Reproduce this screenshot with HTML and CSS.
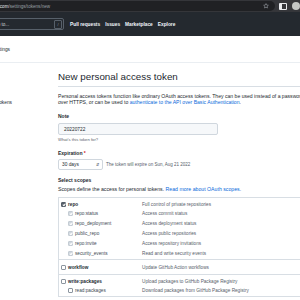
FILE: index.html
```html
<!DOCTYPE html>
<html lang="en">
  <head>
    <meta charset="UTF-8" />
    <meta name="viewport" content="width=device-width, initial-scale=1.0" />
    <title>New personal access token</title>
    <link rel="stylesheet" href="styles.css">
  </head>
  <body>
    <div class="browser-bar">
      <div class="url-field">
        <span class="url-text"><span class="url-host">github.com</span>/settings/tokens/new</span>
        <svg class="url-star" width="6" height="6" viewBox="0 0 16 16">
          <path d="M8 1.5l1.9 4 4.4.5-3.3 3 .9 4.4L8 11.2 4.1 13.4 5 9 1.7 6l4.4-.5z" fill="none" stroke="#9aa0a6" stroke-width="1.6" />
        </svg>
      </div>
      <span class="side-icon"></span>
      <span class="profile-icon"></span>
    </div>

    <header class="gh-header">
      <div class="search">
        <span class="search-text">Jump to...</span>
        <kbd class="search-key">/</kbd>
      </div>
      <nav class="gh-nav">
        <a href="#">Pull requests</a>
        <a href="#">Issues</a>
        <a href="#">Marketplace</a>
        <a href="#">Explore</a>
      </nav>
    </header>

    <div class="breadcrumb">
      <span class="cut-left">Settings</span>
    </div>

    <div class="layout">
      <aside class="sidebar">
        <span class="cut-left side-item">Personal access tokens</span>
      </aside>

      <main class="content">
        <h2 class="page-title">New personal access token</h2>
        <p class="intro">
          Personal access tokens function like ordinary OAuth access tokens. They can be used instead of a password for Git<br>
          over HTTPS, or can be used to <a href="#">authenticate to the API over Basic Authentication</a>.
        </p>

        <div class="form-group">
          <label class="field-label">Note</label>
          <div class="text-input">20220722</div>
          <div class="hint">What's this token for?</div>
        </div>

        <div class="form-group expiration">
          <label class="field-label">Expiration <span class="required">*</span></label>
          <div class="expire-row">
            <div class="select">30 days <span class="select-arrows">&#8693;</span></div>
            <span class="expire-note">The token will expire on Sun, Aug 21 2022</span>
          </div>
        </div>

        <div class="form-group scopes">
          <label class="field-label">Select scopes</label>
          <div class="scopes-note">Scopes define the access for personal tokens. <a href="#">Read more about OAuth scopes.</a></div>

          <div class="scope-box">
            <div class="scope-group">
              <div class="scope-row top">
                <span class="check checked"></span><span class="scope-name">repo</span>
                <span class="scope-desc">Full control of private repositories</span>
              </div>
              <div class="scope-row sub">
                <span class="check muted"></span><span class="scope-name">repo:status</span>
                <span class="scope-desc">Access commit status</span>
              </div>
              <div class="scope-row sub">
                <span class="check muted"></span><span class="scope-name">repo_deployment</span>
                <span class="scope-desc">Access deployment status</span>
              </div>
              <div class="scope-row sub">
                <span class="check muted"></span><span class="scope-name">public_repo</span>
                <span class="scope-desc">Access public repositories</span>
              </div>
              <div class="scope-row sub">
                <span class="check muted"></span><span class="scope-name">repo:invite</span>
                <span class="scope-desc">Access repository invitations</span>
              </div>
              <div class="scope-row sub">
                <span class="check muted"></span><span class="scope-name">security_events</span>
                <span class="scope-desc">Read and write security events</span>
              </div>
            </div>

            <div class="scope-group single">
              <div class="scope-row top">
                <span class="check"></span><span class="scope-name">workflow</span>
                <span class="scope-desc">Update GitHub Action workflows</span>
              </div>
            </div>

            <div class="scope-group">
              <div class="scope-row top">
                <span class="check"></span><span class="scope-name">write:packages</span>
                <span class="scope-desc">Upload packages to GitHub Package Registry</span>
              </div>
              <div class="scope-row sub">
                <span class="check"></span><span class="scope-name">read:packages</span>
                <span class="scope-desc">Download packages from GitHub Package Registry</span>
              </div>
            </div>
          </div>
        </div>
      </main>
    </div>
  </body>
</html>
```

FILE: styles.css
```css
body {
  margin: 0;
  width: 300px;
  height: 300px;
  overflow: hidden;
  font-family: "Liberation Sans", Arial, sans-serif;
  color: #24292f;
  background-color: #fff;
}

a {
  color: #0969da;
  text-decoration: none;
}

/* Browser toolbar */
.browser-bar {
  display: flex;
  align-items: center;
  height: 12px;
  background-color: #35363a;
}

.url-field {
  display: flex;
  align-items: center;
  justify-content: space-between;
  width: 277px;
  height: 10px;
  background-color: #202124;
  border-radius: 0 5px 5px 0;
  overflow: hidden;
}

.url-text {
  margin-left: -14px;
  font-size: 4.6px;
  color: #9aa0a6;
  white-space: nowrap;
}

.url-host {
  color: #e8eaed;
}

.url-star {
  margin-right: 6px;
}

.side-icon {
  width: 4px;
  height: 5px;
  margin-left: 4px;
  border: 1px solid #e8eaed;
  border-left-width: 3px;
  border-radius: 1px;
}

.profile-icon {
  width: 8px;
  height: 8px;
  margin-left: 5px;
  border-radius: 50%;
  background-color: #c4c7c5;
  flex-shrink: 0;
}

/* GitHub header */
.gh-header {
  display: flex;
  align-items: center;
  height: 24px;
  background-color: #24292f;
}

.search {
  display: flex;
  align-items: center;
  justify-content: space-between;
  box-sizing: border-box;
  width: 80px;
  height: 12px;
  margin-left: -16px;
  padding: 0 1px 0 4px;
  border: 1px solid #57606a;
  border-radius: 2px;
}

.search-text {
  font-size: 4.6px;
  color: #c9d1d9;
}

.search-key {
  display: flex;
  align-items: center;
  justify-content: center;
  width: 6px;
  height: 7px;
  border: 1px solid #57606a;
  border-radius: 1px;
  font-family: "Liberation Sans", Arial, sans-serif;
  font-size: 4px;
  color: #8c959f;
}

.gh-nav {
  display: flex;
  gap: 5px;
  margin-left: 6px;
}

.gh-nav a {
  font-size: 4.8px;
  font-weight: bold;
  color: #f0f6fc;
}

/* Breadcrumb and sidebar */
.breadcrumb {
  display: flex;
  align-items: center;
  height: 26px;
  border-bottom: 1px solid #eaeef2;
}

.cut-left {
  display: flex;
  justify-content: flex-end;
  white-space: nowrap;
  font-size: 4.8px;
}

.breadcrumb .cut-left {
  width: 10px;
}

.layout {
  display: flex;
}

.sidebar {
  flex: 0 0 58px;
  padding-top: 37px;
}

.side-item {
  width: 12px;
}

/* Main column */
.content {
  flex: 0 0 400px;
  padding-top: 8px;
}

.page-title {
  margin: 0;
  padding-bottom: 3px;
  font-size: 9.8px;
  font-weight: normal;
  line-height: 12px;
  border-bottom: 1px solid #d8dee4;
}

.intro {
  margin: 7px 0 0;
  font-size: 5.1px;
  line-height: 5.6px;
  white-space: nowrap;
}

.form-group {
  margin-top: 8px;
}

.field-label {
  display: block;
  font-size: 5px;
  font-weight: bold;
  line-height: 6px;
}

.required {
  color: #cf222e;
}

.text-input {
  display: flex;
  align-items: center;
  box-sizing: border-box;
  width: 160px;
  height: 12px;
  margin-top: 4px;
  padding-left: 5px;
  background-color: #f6f8fa;
  border: 1px solid #d0d7de;
  border-radius: 2px;
  font-size: 4.8px;
}

.hint {
  margin-top: 2px;
  font-size: 4.2px;
  line-height: 5px;
  color: #57606a;
}

.expiration {
  margin-top: 8px;
}

.expire-row {
  display: flex;
  align-items: center;
  gap: 3px;
  margin-top: 3px;
}

.select {
  display: flex;
  align-items: center;
  justify-content: space-between;
  box-sizing: border-box;
  width: 45px;
  height: 11px;
  padding: 0 3px;
  border: 1px solid #d0d7de;
  border-radius: 2px;
  font-size: 4.8px;
}

.select-arrows {
  font-size: 4px;
  color: #57606a;
}

.expire-note {
  font-size: 4.5px;
  color: #57606a;
}

.scopes {
  margin-top: 7px;
}

.scopes-note {
  margin-top: 3px;
  font-size: 5.2px;
  line-height: 6px;
  white-space: nowrap;
}

/* Scope table */
.scope-box {
  margin-top: 5px;
  border-top: 1px solid #d8dee4;
  border-left: 1px solid #d8dee4;
}

.scope-group {
  padding: 2px 0 1px;
  border-bottom: 1px solid #d8dee4;
}

.scope-group.single {
  padding: 2px 0;
}

.scope-row {
  display: flex;
  align-items: center;
  font-size: 4.7px;
  white-space: nowrap;
}

.scope-row.top {
  height: 8px;
  padding-left: 2px;
}

.scope-group.single .scope-row.top {
  height: 10px;
}

.scope-row.sub {
  height: 10px;
  padding-left: 9px;
}

.check {
  position: relative;
  box-sizing: border-box;
  width: 5px;
  height: 5px;
  border: 1px solid #8c959f;
  border-radius: 1px;
  background-color: #fff;
  flex-shrink: 0;
}

.check.checked,
.check.muted {
  background-color: #57606a;
  border-color: #57606a;
}

.check.muted {
  background-color: #d0d7de;
  border-color: #c4ccd4;
}

/* tick mark */
.check.checked::after,
.check.muted::after {
  content: "";
  position: absolute;
  left: 0.6px;
  top: -0.2px;
  width: 1.4px;
  height: 2.4px;
  border: solid #fff;
  border-width: 0 0.8px 0.8px 0;
  transform: rotate(40deg);
}

.scope-name {
  width: 74px;
  margin-left: 2px;
  font-weight: bold;
}

.scope-row.sub .scope-name {
  width: 67px;
  font-weight: normal;
  color: #424a53;
}

.scope-desc {
  color: #57606a;
}
```
